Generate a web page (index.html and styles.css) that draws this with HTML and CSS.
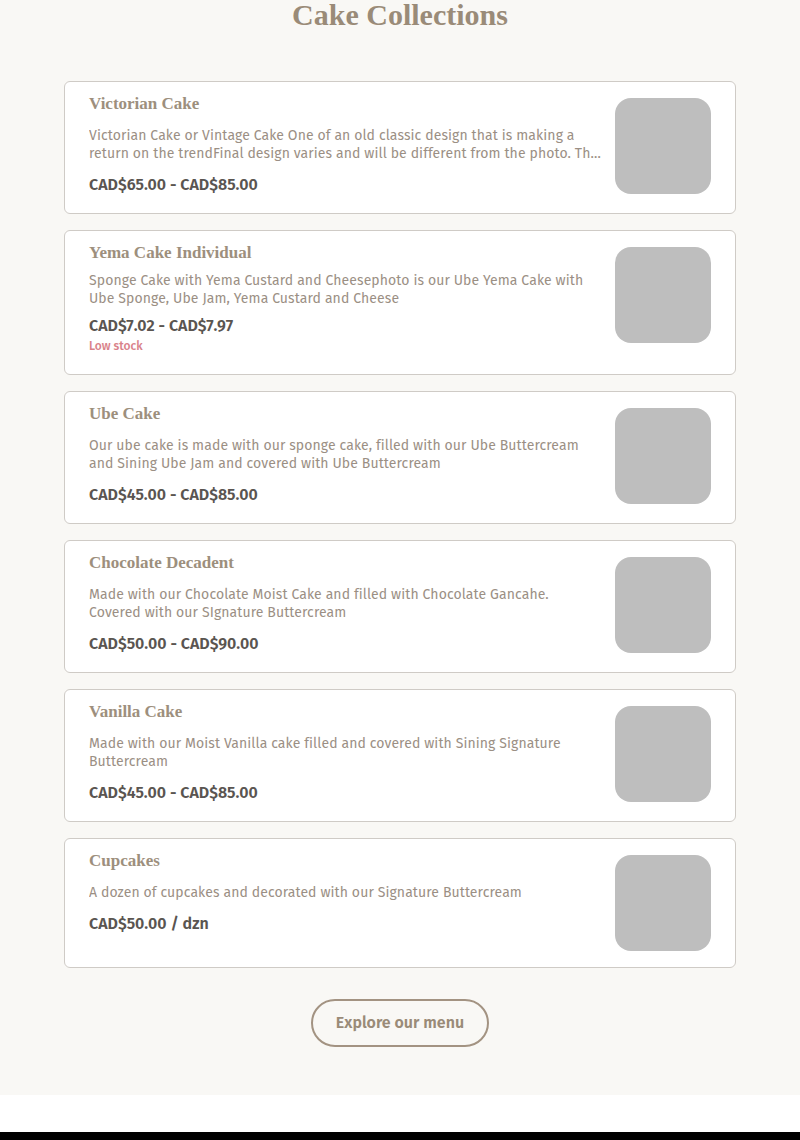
FILE: index.html
```html
<!DOCTYPE html>
<html lang="en">
<head>
  <meta charset="UTF-8" />
  <meta name="viewport" content="width=device-width, initial-scale=1.0"/>
  <title>Cake Collections</title>
  <link rel="stylesheet" href="styles.css">
</head>
<body>
  <section class="collections">
    <h1>Cake Collections</h1>

    <div class="product-list">
      <div class="product">
        <div class="product-info">
          <h2>Victorian Cake</h2>
          <p class="desc">Victorian Cake or Vintage Cake One of an old classic design that is making a return on the trendFinal design varies and will be different from the photo. The cake is decorated with buttercream piping and pearls.</p>
          <div class="price">CAD$65.00 - CAD$85.00</div>
        </div>
        <div class="thumb"></div>
      </div>

      <div class="product tight">
        <div class="product-info">
          <h2>Yema Cake Individual</h2>
          <p class="desc">Sponge Cake with Yema Custard and Cheesephoto is our Ube Yema Cake with Ube Sponge, Ube Jam, Yema Custard and Cheese</p>
          <div class="price">CAD$7.02 - CAD$7.97</div>
          <div class="stock">Low stock</div>
        </div>
        <div class="thumb"></div>
      </div>

      <div class="product">
        <div class="product-info">
          <h2>Ube Cake</h2>
          <p class="desc">Our ube cake is made with our sponge cake, filled with our Ube Buttercream and Sining Ube Jam and covered with Ube Buttercream</p>
          <div class="price">CAD$45.00 - CAD$85.00</div>
        </div>
        <div class="thumb"></div>
      </div>

      <div class="product">
        <div class="product-info">
          <h2>Chocolate Decadent</h2>
          <p class="desc">Made with our Chocolate Moist Cake and filled with Chocolate Gancahe. Covered with our SIgnature Buttercream</p>
          <div class="price">CAD$50.00 - CAD$90.00</div>
        </div>
        <div class="thumb"></div>
      </div>

      <div class="product">
        <div class="product-info">
          <h2>Vanilla Cake</h2>
          <p class="desc">Made with our Moist Vanilla cake filled and covered with Sining Signature Buttercream</p>
          <div class="price">CAD$45.00 - CAD$85.00</div>
        </div>
        <div class="thumb"></div>
      </div>

      <div class="product">
        <div class="product-info">
          <h2>Cupcakes</h2>
          <p class="desc">A dozen of cupcakes and decorated with our Signature Buttercream</p>
          <div class="price">CAD$50.00 / dzn</div>
        </div>
        <div class="thumb"></div>
      </div>
    </div>

    <div class="more">
      <a href="#" class="btn">Explore our menu</a>
    </div>
  </section>

  <div class="spacer"></div>
  <footer></footer>
</body>
</html>
```

FILE: styles.css
```css
body {
  margin: 0;
  background: #ffffff;
  font-family: 'Fira Sans', Roboto, sans-serif;
}

.collections {
  background: #f9f8f5;
  padding: 0 64px 48px;
}

h1 {
  margin: 0;
  font-family: 'Liberation Serif', serif;
  font-size: 30px;
  line-height: 30px;
  font-weight: 700;
  color: #9a8b78;
  text-align: center;
}

.product-list {
  display: flex;
  flex-direction: column;
  gap: 16px;
  margin-top: 51px;
}

.product {
  display: flex;
  align-items: flex-start;
  gap: 14px;
  background: #ffffff;
  border: 1px solid #cfcbc6;
  border-radius: 6px;
  padding: 0 24px;
  min-height: 128px;
}

.product-info {
  flex: 1;
  display: flex;
  flex-direction: column;
  gap: 12px;
  padding: 11px 0 18px;
}

.product.tight .product-info {
  gap: 8px;
  padding-bottom: 20px;
}

.product.tight .stock {
  margin-top: -6px;
}

.product h2 {
  margin: 0;
  font-family: 'Liberation Serif', serif;
  font-size: 17px;
  line-height: 22px;
  font-weight: 700;
  color: #9d8f7d;
}

.desc {
  margin: 0;
  font-size: 14px;
  line-height: 18px;
  letter-spacing: 0.1px;
  color: #9b8f84;
  display: -webkit-box;
  -webkit-line-clamp: 2;
  -webkit-box-orient: vertical;
  overflow: hidden;
}

.price {
  font-size: 16px;
  line-height: 20px;
  font-weight: 600;
  color: #5a5551;
}

.stock {
  font-size: 12px;
  line-height: 16px;
  font-weight: 500;
  color: #d9828a;
}

.thumb {
  width: 96px;
  height: 96px;
  flex-shrink: 0;
  margin-top: 16px;
  background: #bebebe;
  border-radius: 16px;
}

.more {
  display: flex;
  justify-content: center;
  margin-top: 31px;
}

.btn {
  display: inline-block;
  width: 174px;
  height: 44px;
  line-height: 44px;
  text-align: center;
  border: 2px solid #a39382;
  border-radius: 24px;
  color: #9a8b78;
  font-size: 16px;
  font-weight: 600;
  text-decoration: none;
}

.spacer {
  height: 37px;
}

footer {
  background: #000000;
  height: 40px;
}
```
